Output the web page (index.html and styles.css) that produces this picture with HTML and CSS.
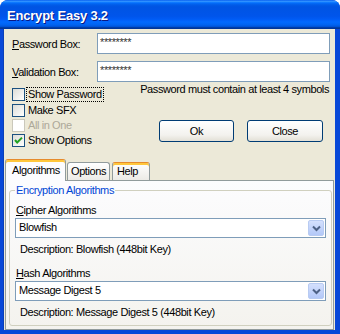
FILE: index.html
```html
<!DOCTYPE html>
<html lang="en">
<head>
    <meta charset="UTF-8">
    <title>Encrypt Easy 3.2</title>
    <link rel="stylesheet" href="styles.css">
</head>
<body>
    <div class="window">
        <div class="titlebar"><span class="title">Encrypt Easy 3.2</span></div>
        <div class="client">
            <div class="field">
                <label class="field-label"><u>P</u>assword Box:</label>
                <div class="textbox">********</div>
            </div>
            <div class="field">
                <label class="field-label"><u>V</u>alidation Box:</label>
                <div class="textbox">********</div>
            </div>

            <div class="middle">
                <div class="checks">
                    <div class="check"><span class="box"></span><span class="check-label focus">Show Password</span></div>
                    <div class="check"><span class="box"></span><span class="check-label">Make SFX</span></div>
                    <div class="check disabled"><span class="box"></span><span class="check-label">All in One</span></div>
                    <div class="check">
                        <span class="box">
                            <svg width="11" height="11" viewBox="0 0 11 11"><path d="M2 5 L4.2 7.5 L9 2.6" fill="none" stroke="#21a121" stroke-width="2"/></svg>
                        </span>
                        <span class="check-label">Show Options</span>
                    </div>
                </div>
                <div class="actions">
                    <div class="hint">Password must contain at least 4 symbols</div>
                    <div class="buttons">
                        <button class="btn">Ok</button>
                        <button class="btn">Close</button>
                    </div>
                </div>
            </div>

            <div class="tabs">
                <div class="tab selected">Algorithms</div>
                <div class="tab">Options</div>
                <div class="tab hot">Help</div>
            </div>
            <div class="panel">
                <fieldset class="group">
                    <legend>Encryption Algorithms</legend>
                    <div class="group-label"><u>C</u>ipher Algorithms</div>
                    <div class="combo">
                        <span class="combo-text">Blowfish</span>
                        <span class="combo-btn"><svg width="15" height="16" viewBox="0 0 15 16"><path d="M4 6.5 L7.5 10 L11 6.5" fill="none" stroke="#4d6185" stroke-width="2"/></svg></span>
                    </div>
                    <div class="desc">Description: Blowfish (448bit Key)</div>
                    <div class="group-label hash"><u>H</u>ash Algorithms</div>
                    <div class="combo">
                        <span class="combo-text">Message Digest 5</span>
                        <span class="combo-btn"><svg width="15" height="16" viewBox="0 0 15 16"><path d="M4 6.5 L7.5 10 L11 6.5" fill="none" stroke="#4d6185" stroke-width="2"/></svg></span>
                    </div>
                    <div class="desc">Description: Message Digest 5 (448bit Key)</div>
                </fieldset>
            </div>
        </div>
    </div>
</body>
</html>
```

FILE: styles.css
```css
body {
    margin: 0;
    background: #fff;
    font-family: "Liberation Sans", Arial, sans-serif;
    font-size: 11px;
    letter-spacing: -0.4px;
    color: #000;
}
.window {
    width: 340px;
    height: 334px;
    display: flex;
    flex-direction: column;
    background: #0848d8;
    border-radius: 8px 8px 0 0;
    overflow: hidden;
}
.titlebar {
    height: 29px;
    flex: none;
    box-sizing: border-box;
    padding: 2px 0 0 7px;
    display: flex;
    align-items: center;
    background: linear-gradient(to bottom, #0058ee 0%, #3593ff 4%, #288eff 6%, #127dff 8%, #036ffc 10%, #0262ee 14%, #0057e5 20%, #0054e3 24%, #0055eb 56%, #005bf5 66%, #026afe 76%, #0062ef 86%, #0052d6 92%, #0040ab 94%, #003092 100%);
}
.title {
    color: #fff;
    font-weight: bold;
    font-size: 13px;
    letter-spacing: -0.2px;
    text-shadow: 1px 1px 0 #0a1883;
}
.client {
    flex: 1;
    margin: 0 5px 4px 3px;
    padding-top: 4px;
    display: flex;
    flex-direction: column;
    background: #ece9d8;
    border-left: 1px solid #0a3fb8;
}

.field {
    display: flex;
    align-items: center;
    height: 21px;
    padding-left: 8px;
}
.field + .field { margin-top: 7px; }
.field-label {
    width: 85px;
    padding-top: 1px;
}
.textbox {
    width: 233px;
    height: 21px;
    box-sizing: border-box;
    border: 1px solid #7f9db9;
    background: #fff;
    padding: 2px 0 0 2px;
    line-height: 13px;
    color: #333;
}

.middle { display: flex; }
.checks {
    width: 116px;
    flex: none;
    padding: 5px 0 0 8px;
}
.check {
    display: flex;
    align-items: flex-start;
    height: 15px;
}
.check:first-child { height: 16px; }
.box {
    width: 13px;
    height: 13px;
    box-sizing: border-box;
    border: 1px solid #1c5180;
    background: linear-gradient(135deg, #dcdcd7, #fff);
    margin-top: 1px;
    flex: none;
}
.box svg { display: block; }
.check-label {
    margin-left: 1px;
    padding: 0 1px;
    line-height: 13px;
    border: 1px dotted transparent;
    white-space: nowrap;
}
.check-label.focus { border-color: #000; }
.check.disabled .box { border-color: #cac8bb; background: #fff; }
.check.disabled .check-label { color: #aca899; }

.actions {
    flex: 1;
    padding-right: 6px;
}
.hint {
    margin-top: 1px;
    line-height: 13px;
    text-align: right;
    white-space: nowrap;
}
.buttons {
    display: flex;
    justify-content: flex-end;
    gap: 13px;
    margin: 24px 6px 0 0;
}
.btn {
    width: 75px;
    height: 22px;
    padding: 0;
    border: 1px solid #003c74;
    border-radius: 3px;
    background: linear-gradient(to bottom, #fff 0%, #f3f2ee 70%, #e3e0d6 100%);
    font: inherit;
    letter-spacing: inherit;
    color: #000;
}
.btn + .btn { width: 76px; }

.tabs {
    display: flex;
    align-items: flex-end;
    height: 21px;
    margin-top: 11px;
    margin-left: 1px;
}
.tab {
    height: 18px;
    box-sizing: border-box;
    border: 1px solid #919b9c;
    border-bottom: none;
    border-radius: 3px 3px 0 0;
    background: linear-gradient(to bottom, #fff, #ecebe6);
    padding: 2px 0 0 3px;
    line-height: 13px;
    width: 43px;
    margin-left: 1px;
}
.tab.selected {
    width: 61px;
    height: 22px;
    margin: 0 0 -1px 0;
    padding: 4px 0 0 6px;
    background: #fcfcfe;
    border-top-color: #e68b2c;
    box-shadow: inset 0 2px 0 #ffc73c;
    position: relative;
    z-index: 1;
}
.tab.hot {
    width: 38px;
    margin-left: 2px;
    padding-left: 4px;
    border-top-color: #e68b2c;
    box-shadow: inset 0 2px 0 #ffc73c;
}

.panel {
    flex: 1;
    display: flex;
    margin: 0 1px 0 1px;
    padding: 3px 1px 3px 3px;
    border: 1px solid #919b9c;
    background: linear-gradient(to bottom, #fcfcfe, #f4f3ee);
}
.group {
    flex: 1;
    margin: 0;
    padding: 0 5px 0 6px;
    border: 1px solid #d0d0bf;
    border-radius: 3px;
    min-width: 0;
}
.group legend {
    padding: 0 1px;
    margin-left: -1px;
    line-height: 13px;
    color: #0046d5;
}
.group-label {
    margin-top: 7px;
    line-height: 13px;
    margin-bottom: 1px;
}
.group-label.hash { margin-top: 11px; }
.combo {
    display: flex;
    height: 20px;
    box-sizing: border-box;
    margin-left: -1px;
    border: 1px solid #7f9db9;
    background: #fff;
}
.combo-text {
    flex: 1;
    padding: 2px 0 0 3px;
    line-height: 13px;
}
.combo-btn {
    width: 16px;
    margin: 1px;
    box-sizing: border-box;
    border: 1px solid #b8cbf2;
    border-radius: 2px;
    background: linear-gradient(to bottom, #d4e0fd, #b3c8f8);
}
.combo-btn svg { display: block; margin-top: -1px; }
.desc {
    margin-top: 5px;
    padding-left: 4px;
    line-height: 13px;
}
```
